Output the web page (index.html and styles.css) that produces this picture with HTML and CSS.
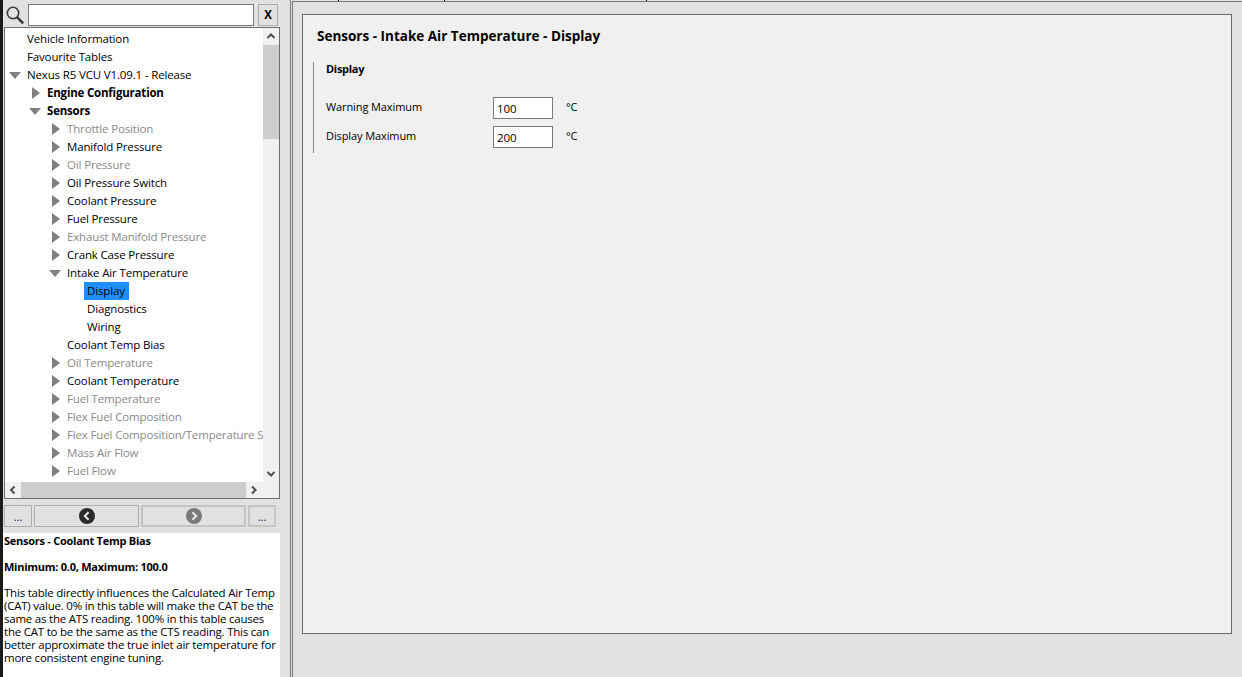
FILE: index.html
```html
<!DOCTYPE html>
<html lang="en">
<head>
    <meta charset="UTF-8">
    <meta name="viewport" content="width=device-width, initial-scale=1.0">
    <title>Sensors - Intake Air Temperature - Display</title>
    <link rel="stylesheet" href="styles.css">
</head>
<body>

    <!-- Left panel -->
    <div class="side">
        <!-- Search bar -->
        <div class="search">
            <svg class="search-icon" width="20" height="20" viewBox="0 0 20 20">
                <circle cx="8" cy="8" r="5.7" fill="none" stroke="#3a3a3a" stroke-width="1.6"/>
                <path d="M12 12.2 L18.2 18.4" stroke="#3a3a3a" stroke-width="2.6"/>
            </svg>
            <input type="text" class="search-input">
            <div class="search-clear">X</div>
        </div>

        <!-- Tree -->
        <div class="tree-box">
            <div class="tree-main">
                <div class="tree">
                    <div class="row lvl0">Vehicle Information</div>
                    <div class="row lvl0">Favourite Tables</div>
                    <div class="row lvl0"><span class="arrow open"></span>Nexus R5 VCU V1.09.1 - Release</div>
                    <div class="row lvl1 bold"><span class="arrow"></span>Engine Configuration</div>
                    <div class="row lvl1 bold"><span class="arrow open"></span>Sensors</div>
                    <div class="row lvl2 grey"><span class="arrow"></span>Throttle Position</div>
                    <div class="row lvl2"><span class="arrow"></span>Manifold Pressure</div>
                    <div class="row lvl2 grey"><span class="arrow"></span>Oil Pressure</div>
                    <div class="row lvl2"><span class="arrow"></span>Oil Pressure Switch</div>
                    <div class="row lvl2"><span class="arrow"></span>Coolant Pressure</div>
                    <div class="row lvl2"><span class="arrow"></span>Fuel Pressure</div>
                    <div class="row lvl2 grey"><span class="arrow"></span>Exhaust Manifold Pressure</div>
                    <div class="row lvl2"><span class="arrow"></span>Crank Case Pressure</div>
                    <div class="row lvl2"><span class="arrow open"></span>Intake Air Temperature</div>
                    <div class="row lvl3"><span class="selected">Display</span></div>
                    <div class="row lvl3"><span class="plain">Diagnostics</span></div>
                    <div class="row lvl3"><span class="plain">Wiring</span></div>
                    <div class="row lvl2">Coolant Temp Bias</div>
                    <div class="row lvl2 grey"><span class="arrow"></span>Oil Temperature</div>
                    <div class="row lvl2"><span class="arrow"></span>Coolant Temperature</div>
                    <div class="row lvl2 grey"><span class="arrow"></span>Fuel Temperature</div>
                    <div class="row lvl2 grey"><span class="arrow"></span>Flex Fuel Composition</div>
                    <div class="row lvl2 grey"><span class="arrow"></span>Flex Fuel Composition/Temperature Sensor</div>
                    <div class="row lvl2 grey"><span class="arrow"></span>Mass Air Flow</div>
                    <div class="row lvl2 grey"><span class="arrow"></span>Fuel Flow</div>
                </div>
                <!-- Vertical scrollbar -->
                <div class="vscroll">
                    <svg class="chev" width="16" height="17" viewBox="0 0 16 17"><path d="M4.5 10 L8 6.5 L11.5 10" fill="none" stroke="#505050" stroke-width="2"/></svg>
                    <div class="vtrack"><div class="vthumb"></div></div>
                    <svg class="chev" width="16" height="17" viewBox="0 0 16 17"><path d="M4.5 7 L8 10.5 L11.5 7" fill="none" stroke="#505050" stroke-width="2"/></svg>
                </div>
            </div>
            <!-- Horizontal scrollbar -->
            <div class="hscroll">
                <svg class="chev" width="16" height="16" viewBox="0 0 16 16"><path d="M9.5 4.5 L6 8 L9.5 11.5" fill="none" stroke="#505050" stroke-width="2"/></svg>
                <div class="htrack"><div class="hthumb"></div></div>
                <svg class="chev" width="33" height="16" viewBox="0 0 33 16"><path d="M6 4.5 L9.5 8 L6 11.5" fill="none" stroke="#505050" stroke-width="2"/></svg>
            </div>
        </div>

        <!-- Nav buttons -->
        <div class="nav">
            <div class="btn btn-small">...</div>
            <div class="btn btn-wide">
                <svg width="16" height="16" viewBox="0 0 16 16"><circle cx="8" cy="8" r="8" fill="#2b2b2b"/><path d="M9.6 4.2 L5.8 8 L9.6 11.8" fill="none" stroke="#e8e8e8" stroke-width="2"/></svg>
            </div>
            <div class="btn btn-wide btn-off">
                <svg width="16" height="16" viewBox="0 0 16 16"><circle cx="8" cy="8" r="8" fill="#7a7a7a"/><path d="M6.4 4.2 L10.2 8 L6.4 11.8" fill="none" stroke="#e8e8e8" stroke-width="2"/></svg>
            </div>
            <div class="btn btn-small btn-off">...</div>
        </div>

        <!-- Help text -->
        <div class="help">
            <p class="help-title">Sensors - Coolant Temp Bias</p>
            <p class="help-title">Minimum: 0.0, Maximum: 100.0</p>
            <p>This table directly influences the Calculated Air Temp (CAT) value. 0% in this table will make the CAT be the same as the ATS reading. 100% in this table causes the CAT to be the same as the CTS reading. This can better approximate the true inlet air temperature for more consistent engine tuning.</p>
        </div>
    </div>

    <!-- Right panel -->
    <div class="content">
        <div class="tabs">
            <span class="tab tab-1"></span>
            <span class="tab tab-2"></span>
            <span class="tab tab-3"></span>
        </div>
        <div class="page">
            <div class="card">
                <h2>Sensors - Intake Air Temperature - Display</h2>
                <div class="group">
                    <h3>Display</h3>
                    <div class="field">
                        <label>Warning Maximum</label>
                        <input type="text" value="100">
                        <span class="unit">°C</span>
                    </div>
                    <div class="field">
                        <label>Display Maximum</label>
                        <input type="text" value="200">
                        <span class="unit">°C</span>
                    </div>
                </div>
            </div>
        </div>
    </div>

</body>
</html>
```

FILE: styles.css
```css
/* Page */
body {
    font-family: 'Open Sans', sans-serif;
    font-size: 11.5px;
    letter-spacing: -0.15px;
    margin: 0;
    height: 677px;
    overflow: hidden;
    display: flex;
    background-color: #e1e1e1;
    color: #000;
}

/* Left panel */
.side {
    width: 281px;
    flex-shrink: 0;
    height: 677px;
    display: flex;
    flex-direction: column;
    border-left: 3px solid #1a1a1a;
    box-sizing: border-box;
    background-color: #e1e1e1;
}

/* Search bar */
.search {
    display: flex;
    height: 28px;
    padding: 4px 0 0 2px;
    box-sizing: border-box;
}

.search-icon {
    width: 20px;
    margin: 1px 3px 0 0;
}

.search-input {
    width: 226px;
    height: 22px;
    box-sizing: border-box;
    border: 1px solid #7a7a7a;
    background-color: #fff;
    padding: 0;
    margin-right: 4px;
}

.search-clear {
    width: 20px;
    height: 22px;
    box-sizing: border-box;
    border: 1px solid #adadad;
    font-weight: bold;
    text-align: center;
    line-height: 20px;
}

/* Tree */
.tree-box {
    width: 276px;
    height: 472px;
    margin-left: 1px;
    box-sizing: border-box;
    border: 1px solid #6e6e6e;
    background-color: #fff;
    display: flex;
    flex-direction: column;
}

.tree-main {
    display: flex;
    height: 454px;
}

.tree {
    flex: 1;
    min-width: 0;
    overflow: hidden;
    white-space: nowrap;
    padding-top: 2px;
}

.row {
    height: 18px;
    line-height: 18px;
    display: flex;
    align-items: center;
}

.lvl0 { padding-left: 22px; }
.lvl1 { padding-left: 42px; }
.lvl2 { padding-left: 62px; }
.lvl3 { padding-left: 79px; }

.bold {
    font-weight: bold;
    letter-spacing: -0.2px;
}

.grey { color: #8a8a8a; }

.arrow {
    width: 0;
    height: 0;
    margin-left: -15px;
    margin-right: 7px;
    border-style: solid;
    border-width: 6px 0 6px 8px;
    border-color: transparent transparent transparent #808080;
}

.arrow.open {
    margin-left: -18px;
    margin-right: 6px;
    border-width: 7px 6px 0 6px;
    border-color: #808080 transparent transparent transparent;
}

.selected {
    background-color: #1e90ff;
    width: 45px;
    padding-left: 3px;
    box-sizing: border-box;
    height: 18px;
}

.plain { padding-left: 3px; }

/* Scrollbars */
.vscroll {
    width: 16px;
    flex-shrink: 0;
    background-color: #f0f0f0;
    display: flex;
    flex-direction: column;
}

.vtrack {
    flex: 1;
}

.vthumb {
    height: 94px;
    background-color: #cdcdcd;
}

.chev {
    display: block;
    flex-shrink: 0;
}

.hscroll {
    height: 16px;
    background-color: #f0f0f0;
    display: flex;
}

.htrack {
    flex: 1;
}

.hthumb {
    height: 100%;
    background-color: #cdcdcd;
}

/* Nav buttons */
.nav {
    display: flex;
    gap: 2px;
    padding: 6px 0 0 1px;
    height: 35px;
    box-sizing: border-box;
}

.btn {
    height: 22px;
    box-sizing: border-box;
    border: 1px solid #adadad;
    background-color: #e1e1e1;
    display: flex;
    align-items: center;
    justify-content: center;
    color: #3a0a5a;
}

.btn-small { width: 28px; }
.btn-wide { width: 105px; }

.btn-off {
    border: 2px solid #c4c4c4;
}

/* Help text */
.help {
    width: 277px;
    flex: 1;
    background-color: #fff;
    line-height: 13px;
    letter-spacing: -0.22px;
    padding: 1px 0 0 1px;
    box-sizing: border-box;
}

.help p {
    margin: 0 0 13px 0;
}

.help .help-title {
    font-size: 11px;
    font-weight: bold;
    letter-spacing: -0.26px;
}

/* Right panel */
.content {
    flex: 1;
    height: 677px;
    border-left: 1px solid #7a7a7a;
    margin-left: 9px;
    padding-left: 1px;
    box-sizing: border-box;
}

.tabs {
    display: flex;
    height: 1px;
}

.tab {
    border-right: 1px solid #000;
    box-sizing: border-box;
}

.tab-1 { width: 47px; }
.tab-2 { width: 106px; }
.tab-3 { width: 202px; }

.page {
    height: 676px;
    border-left: 1px solid #7a7a7a;
    border-top: 1px solid #7a7a7a;
    padding: 12px 10px 0 9px;
    box-sizing: border-box;
}

.card {
    height: 620px;
    box-sizing: border-box;
    border: 1px solid #696969;
    background-color: #f0f0f0;
    padding: 12px 14px;
}

h2 {
    font-size: 13.5px;
    font-weight: bold;
    letter-spacing: 0;
    margin: 0 0 16px 0;
    line-height: 19px;
}

/* Settings group */
.group {
    margin-left: -4px;
    padding-left: 12px;
    height: 91px;
    border-left: 1px solid #8a8a8a;
}

h3 {
    font-size: 11px;
    font-weight: bold;
    letter-spacing: -0.3px;
    margin: 0 0 21px 0;
    line-height: 14px;
}

.field {
    display: flex;
    align-items: center;
    height: 22px;
    margin-bottom: 7px;
    font-size: 11px;
    letter-spacing: -0.1px;
}

.field label {
    width: 167px;
    padding-bottom: 4px;
}

.field .unit {
    padding-bottom: 4px;
}

.field input {
    width: 60px;
    height: 22px;
    box-sizing: border-box;
    border: 1px solid #7a7a7a;
    background-color: #fff;
    font-family: 'Open Sans', sans-serif;
    font-size: 11.5px;
    letter-spacing: -0.12px;
    padding: 0 0 0 3px;
    margin-right: 13px;
    color: #000;
}
```
